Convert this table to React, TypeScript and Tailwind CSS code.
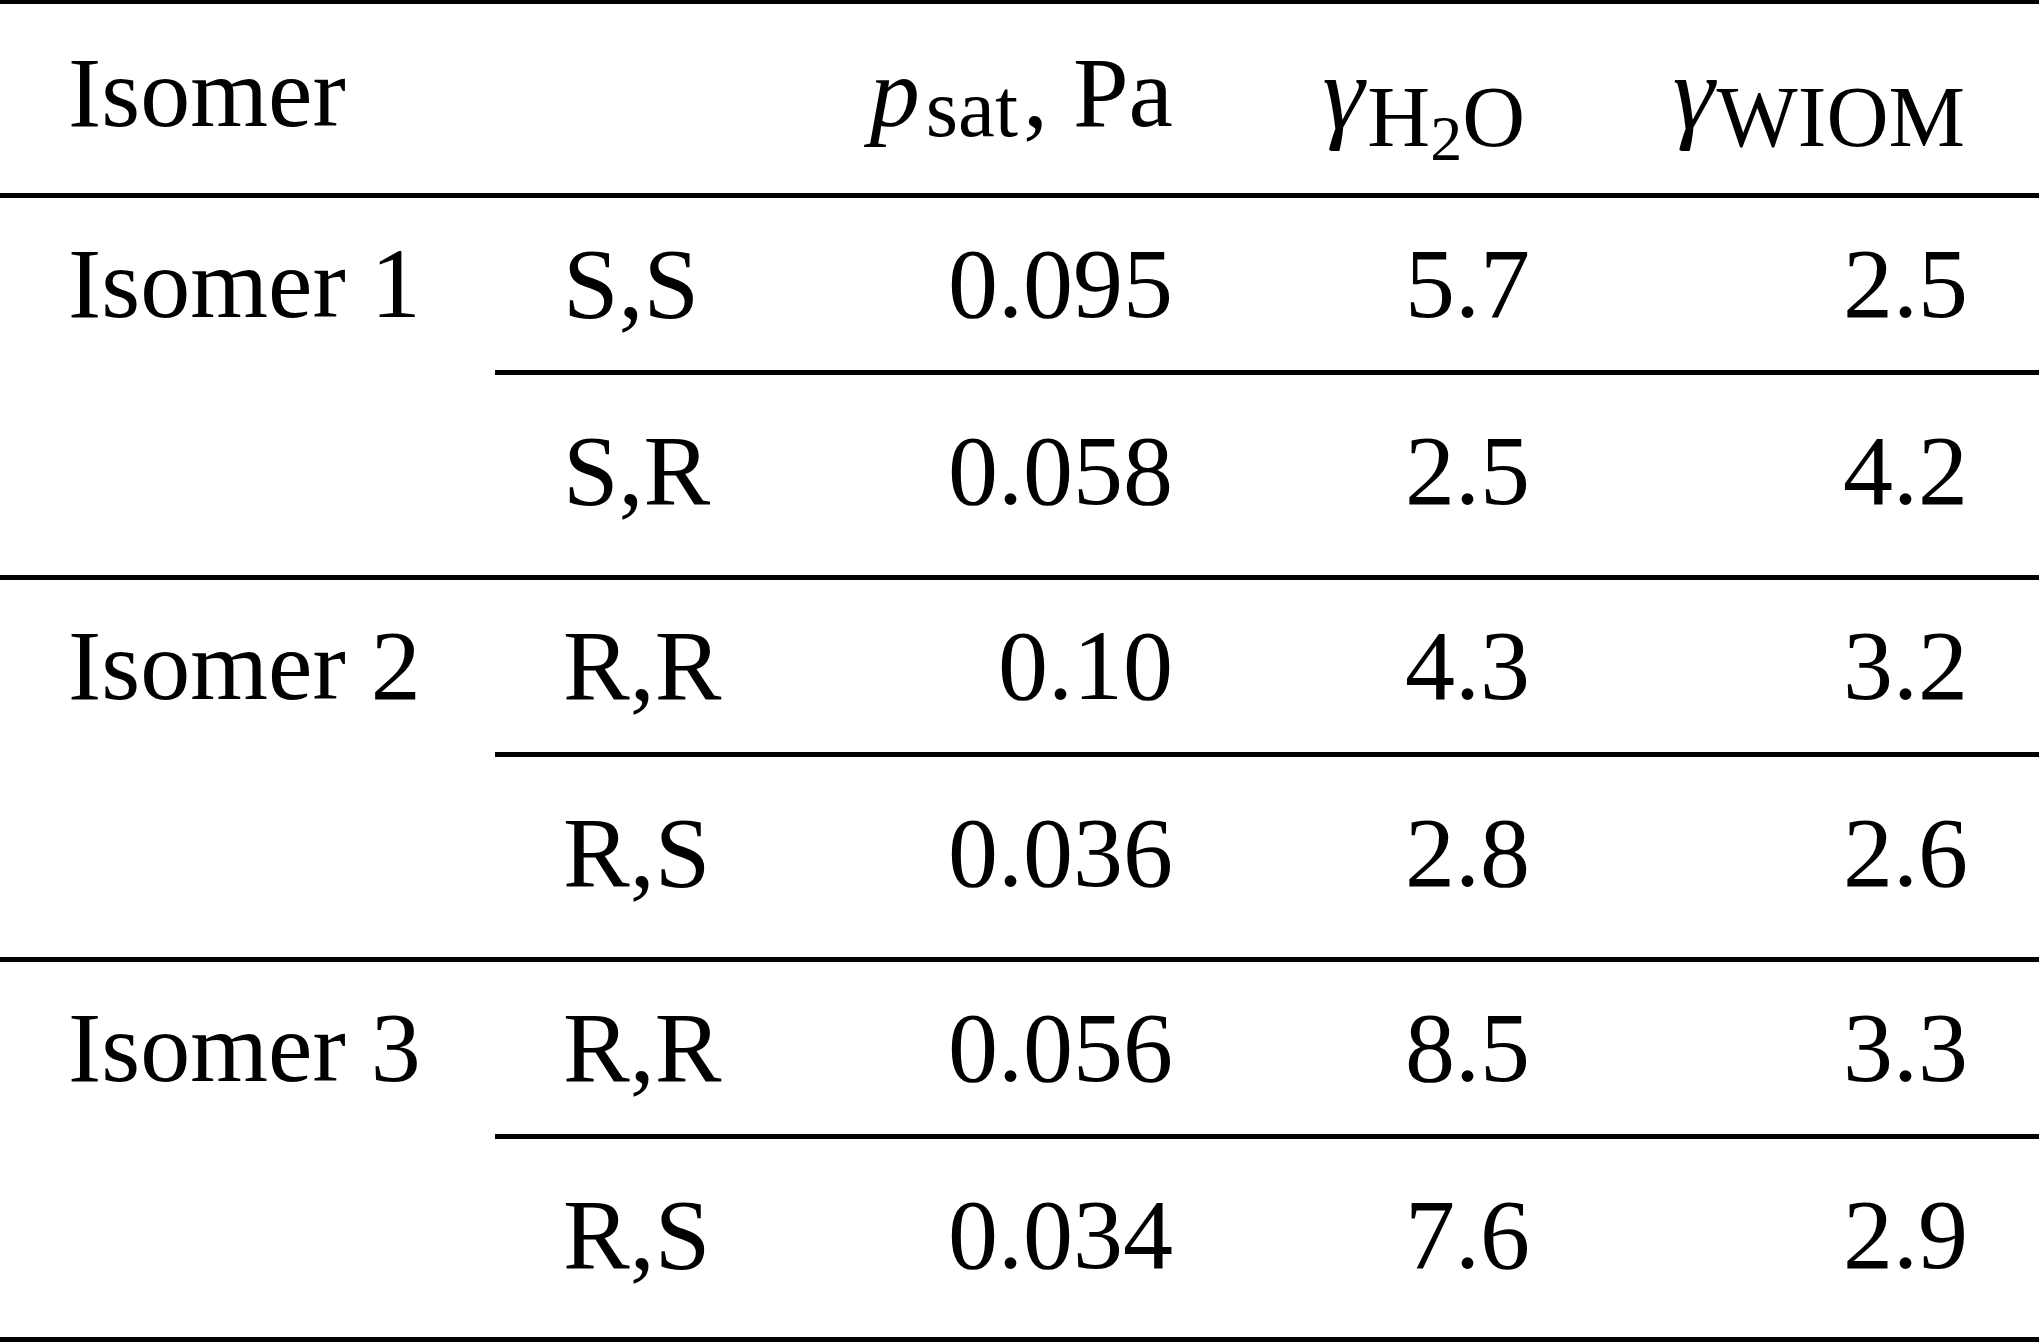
import React from "react";

const serif = "font-['Liberation_Serif','Times_New_Roman',serif]";

type Row = { cfg: string; p: string; h2o: string; wiom: string };
type Group = { label: string; rows: [Row, Row]; last?: boolean };

const groups: Group[] = [
  {
    label: "Isomer 1",
    rows: [
      { cfg: "S,S", p: "0.095", h2o: "5.7", wiom: "2.5" },
      { cfg: "S,R", p: "0.058", h2o: "2.5", wiom: "4.2" },
    ],
  },
  {
    label: "Isomer 2",
    rows: [
      { cfg: "R,R", p: "0.10", h2o: "4.3", wiom: "3.2" },
      { cfg: "R,S", p: "0.036", h2o: "2.8", wiom: "2.6" },
    ],
  },
  {
    label: "Isomer 3",
    last: true,
    rows: [
      { cfg: "R,R", p: "0.056", h2o: "8.5", wiom: "3.3" },
      { cfg: "R,S", p: "0.034", h2o: "7.6", wiom: "2.9" },
    ],
  },
];

function DataCells({ r }: { r: Row }) {
  return (
    <div className="grid grid-cols-[405px_273px_357px_438px_1fr] text-[100px] leading-[100px]">
      <div className="pl-[68px] whitespace-nowrap">{r.cfg}</div>
      <div className="text-right whitespace-nowrap">{r.p}</div>
      <div className="text-right whitespace-nowrap">{r.h2o}</div>
      <div className="text-right whitespace-nowrap">{r.wiom}</div>
      <div />
    </div>
  );
}

export default function App() {
  return (
    <div className={`${serif} w-[2039px] bg-white text-black`}>
      <div className="border-t-4 border-b-[5px] border-black">
        {/* header */}
        <div className="h-[189px] pt-[39px] grid grid-cols-[495px_405px_273px_357px_438px_1fr] text-[100px] leading-[100px]">
          <div className="pl-[68px] whitespace-nowrap">Isomer</div>
          <div />
          <div className="flex justify-end whitespace-nowrap">
            <span>
              <i>p</i>
              <span className="ml-[6px] mr-[5px] text-[83px] leading-none align-[-10px]">sat</span>, Pa
            </span>
          </div>
          <div className="flex justify-end whitespace-nowrap pr-[5px]">
            <span>
              <i className="text-[106px]">γ</i>
              <span className="ml-[3px] text-[87px] leading-none align-[-18px]">
                H
                <span className="text-[64px] leading-none align-[-14px]">2</span>O
              </span>
            </span>
          </div>
          <div className="flex justify-end whitespace-nowrap pr-[3px]">
            <span>
              <i className="text-[106px]">γ</i>
              <span className="ml-[2px] text-[86px] leading-none align-[-18px]">WIOM</span>
            </span>
          </div>
          <div />
        </div>
        {groups.map((g) => (
          <div key={g.label} className="border-t-[5px] border-black grid grid-cols-[495px_1fr]">
            <div className="pl-[68px] pt-[36px] text-[100px] leading-[100px] whitespace-nowrap">
              {g.label}
            </div>
            <div className="flex flex-col">
              <div className="h-[172px] pt-[36px]">
                <DataCells r={g.rows[0]} />
              </div>
              <div
                className={`${g.last ? "h-[203px]" : "h-[205px]"} pt-[46px] border-t-[5px] border-black`}
              >
                <DataCells r={g.rows[1]} />
              </div>
            </div>
          </div>
        ))}
      </div>
    </div>
  );
}
